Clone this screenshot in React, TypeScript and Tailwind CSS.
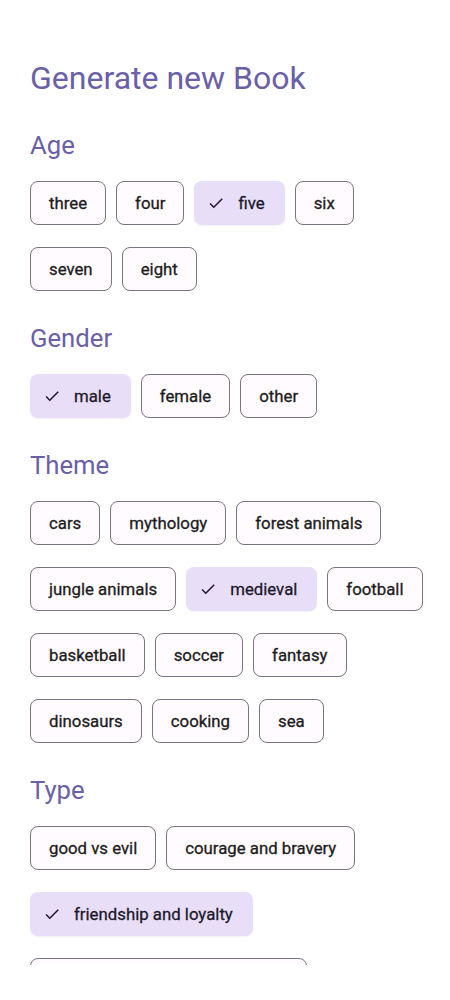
import React from 'react';

const SECTIONS: { title: string; options: string[]; selected: string }[] = [
  {
    title: 'Age',
    options: ['three', 'four', 'five', 'six', 'seven', 'eight'],
    selected: 'five',
  },
  {
    title: 'Gender',
    options: ['male', 'female', 'other'],
    selected: 'male',
  },
  {
    title: 'Theme',
    options: [
      'cars',
      'mythology',
      'forest animals',
      'jungle animals',
      'medieval',
      'football',
      'basketball',
      'soccer',
      'fantasy',
      'dinosaurs',
      'cooking',
      'sea',
    ],
    selected: 'medieval',
  },
  {
    title: 'Type',
    options: [
      'good vs evil',
      'courage and bravery',
      'friendship and loyalty',
      'overcoming fears and obstacles',
    ],
    selected: 'friendship and loyalty',
  },
];

const CheckIcon = () => (
  <svg width="18" height="18" viewBox="0 0 24 24" className="shrink-0 fill-[#1d192b]">
    <path d="M9 16.17L4.83 12l-1.42 1.41L9 19 21 7l-1.41-1.41z" />
  </svg>
);

const Chip: React.FC<{ label: string; selected: boolean }> = ({ label, selected }) =>
  selected ? (
    <div className="h-[44px] flex items-center gap-[13px] pl-[13px] pr-[20px] rounded-[8px] bg-[#e8def8] text-[#1d192b] shadow-[0_1px_2px_rgba(0,0,0,0.06)]">
      <CheckIcon />
      <span>{label}</span>
    </div>
  ) : (
    <div className="h-[44px] flex items-center px-[18px] rounded-[8px] border border-[#79747e] bg-[#fffbfe] text-[#1d1b20]">
      <span>{label}</span>
    </div>
  );

export default function App() {
  return (
    <div
      className="w-[450px] h-[1000px] bg-white"
      style={{ fontFamily: 'Roboto, "Noto Sans", sans-serif' }}
    >
      <div className="h-[965px] overflow-hidden pl-[30px] pr-[16px] pt-[58px]">
        <h1 className="text-[32px] leading-[40px] text-[#6b60a8] font-normal">Generate new Book</h1>
        {SECTIONS.map((section) => (
          <section key={section.title} className="mt-[31px]">
            <h2 className="text-[25.7px] leading-[32px] text-[#6b60a8] font-normal mb-[20px]">
              {section.title}
            </h2>
            <div className="flex flex-wrap gap-x-[10px] gap-y-[22px] text-[16.8px] font-normal leading-[20px] [-webkit-text-stroke:0.3px_currentColor]">
              {section.options.map((opt) => (
                <Chip key={opt} label={opt} selected={opt === section.selected} />
              ))}
            </div>
          </section>
        ))}
      </div>
    </div>
  );
}
